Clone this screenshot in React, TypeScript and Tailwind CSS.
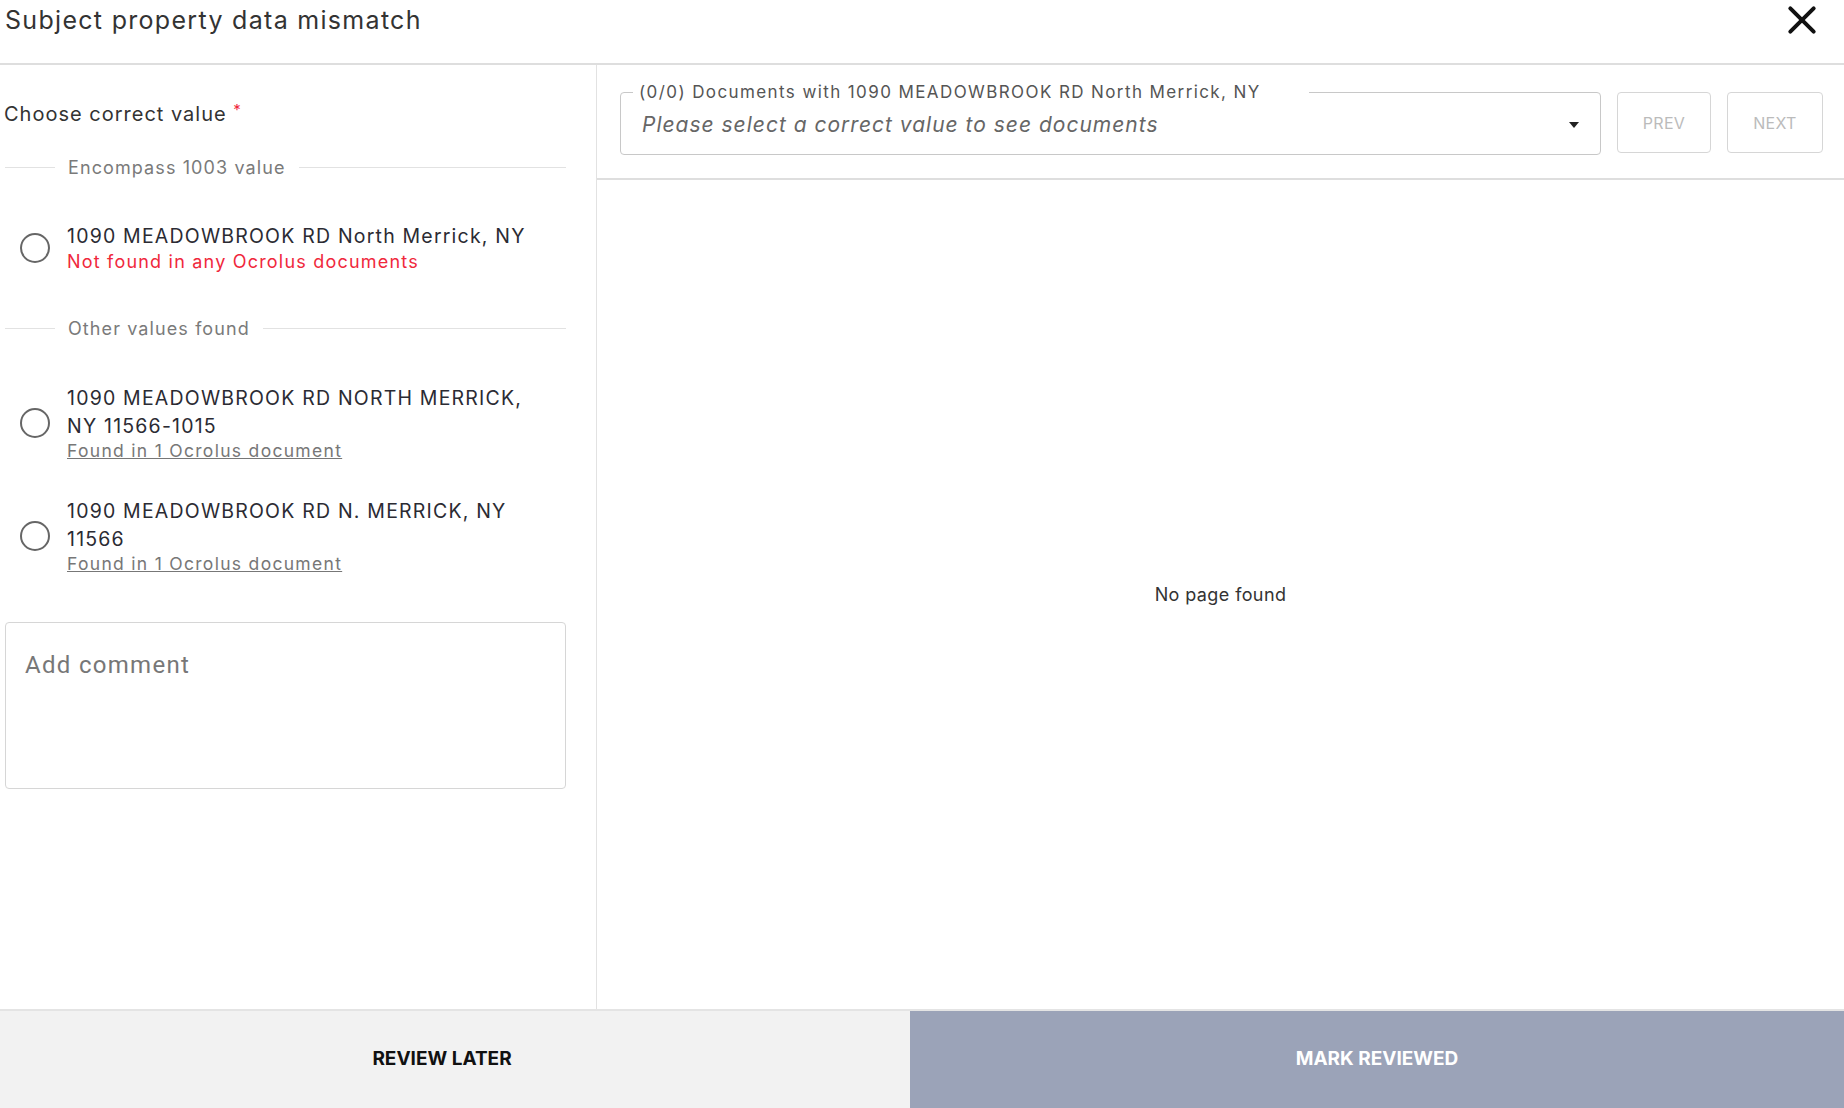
import React from 'react';

const font = { fontFamily: 'Inter, "Noto Sans", sans-serif' };

const Divider = ({ label }: { label: string }) => (
  <div className="flex items-center pl-[5px] pr-[30px]">
    <div className="w-[50px] h-px bg-[#e2e2e2]" />
    <span className="px-[13px] text-[18px] text-[#7a7a7a] tracking-[1.1px]">{label}</span>
    <div className="flex-1 h-px bg-[#e2e2e2]" />
  </div>
);

const Radio = () => (
  <div className="w-[30px] h-[30px] rounded-full border-[2.5px] border-[#666] shrink-0" />
);

const Option = ({ lines, sub, found }: { lines: string[]; sub: string; found: boolean }) => (
  <div className="flex items-center pl-[20px] pr-[30px]">
    <Radio />
    <div className="pl-[17px]">
      {lines.map((l) => (
        <div key={l} className="text-[19.5px] leading-[28px] text-[#2b2b33] tracking-[1.2px]">{l}</div>
      ))}
      {found ? (
        <div className="text-[17.5px] leading-[22px] text-[#777] underline tracking-[1.3px]">{sub}</div>
      ) : (
        <div className="text-[18px] leading-[24px] text-[#f0283c] tracking-[1.2px]">{sub}</div>
      )}
    </div>
  </div>
);

export default function App() {
  return (
    <div className="w-[1844px] h-[1108px] bg-white flex flex-col overflow-hidden" style={font}>
      <div className="h-[65px] shrink-0 flex items-start justify-between border-b-2 border-[#dedede]">
        <h1 className="pl-[5px] pt-[2px] text-[25px] text-[#333] tracking-[1.3px]">Subject property data mismatch</h1>
        <button className="pr-[22px] pt-[0px]">
          <svg width="40" height="40" viewBox="0 0 24 24" fill="none" stroke="#111" strokeWidth="2.4" strokeLinecap="round">
            <path d="M5 5l14 14M19 5L5 19" />
          </svg>
        </button>
      </div>

      <div className="flex-1 flex min-h-0">
        <div className="w-[597px] shrink-0 border-r border-[#e2e2e2] flex flex-col">
          <div className="pl-[4px] pt-[34px] text-[20px] text-[#333] tracking-[1px]">
            Choose correct value <span className="text-[#f0283c] text-[15px] align-top">*</span>
          </div>
          <div className="mt-[25px]">
            <Divider label="Encompass 1003 value" />
          </div>
          <div className="mt-[41px]">
            <Option lines={['1090 MEADOWBROOK RD North Merrick, NY']} sub="Not found in any Ocrolus documents" found={false} />
          </div>
          <div className="mt-[41px]">
            <Divider label="Other values found" />
          </div>
          <div className="mt-[42px]">
            <Option lines={['1090 MEADOWBROOK RD NORTH MERRICK,', 'NY 11566-1015']} sub="Found in 1 Ocrolus document" found />
          </div>
          <div className="mt-[35px]">
            <Option lines={['1090 MEADOWBROOK RD N. MERRICK, NY', '11566']} sub="Found in 1 Ocrolus document" found />
          </div>
          <div className="mt-[47px] ml-[5px] mr-[30px] h-[167px] border border-[#d6d6d6] rounded-[4px] px-[19px] pt-[24px]">
            <span className="text-[24px] text-[#777] tracking-[1.3px]" style={{ fontFamily: 'Roboto, sans-serif' }}>Add comment</span>
          </div>
        </div>

        <div className="flex-1 flex flex-col">
          <div className="h-[115px] shrink-0 border-b-2 border-[#dedede] flex items-start pl-[23px] pr-[21px] pt-[27px] gap-[16px]">
            <div className="relative flex-1 h-[63px] border border-[#c8c8c8] rounded-[4px] flex items-center pl-[21px] pr-[20px]">
              <span className="absolute -top-[13px] left-[12px] bg-white pl-[6px] pr-[48px] text-[17px] text-[#555] tracking-[1.4px]">
                (0/0) Documents with 1090 MEADOWBROOK RD North Merrick, NY
              </span>
              <span className="flex-1 pt-[3px] text-[21px] italic text-[#666] tracking-[1px]">Please select a correct value to see documents</span>
              <svg width="12" height="8" viewBox="0 0 12 8" className="mt-[2px]"><path d="M1 1h10L6 7z" fill="#222" /></svg>
            </div>
            <button className="w-[94px] h-[61px] border border-[#d6d6d6] rounded-[4px] text-[16px] text-[#bbb] tracking-[0.3px]">PREV</button>
            <button className="w-[96px] h-[61px] border border-[#d6d6d6] rounded-[4px] text-[16px] text-[#bbb] tracking-[0.3px]">NEXT</button>
          </div>
          <div className="flex-1 flex items-center justify-center">
            <span className="text-[18px] text-[#333] tracking-[0.4px]">No page found</span>
          </div>
        </div>
      </div>

      <div className="h-[99px] shrink-0 flex border-t-2 border-[#e4e4e4]">
        <button className="w-[910px] bg-[#f2f2f2] text-[19px] font-bold text-[#111] pr-[26px]">REVIEW LATER</button>
        <button className="flex-1 bg-[#9ba3b8] text-[19px] font-bold text-white">MARK REVIEWED</button>
      </div>
    </div>
  );
}
